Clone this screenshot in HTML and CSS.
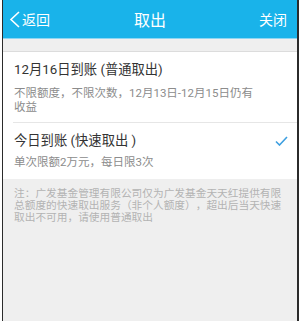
FILE: index.html
```html
<!DOCTYPE html>
<html lang="zh-CN">
<head>
    <meta charset="UTF-8">
    <meta name="viewport" content="width=device-width, initial-scale=1.0">
    <title>取出</title>
    <link rel="stylesheet" href="styles.css">
</head>
<body>
    <div class="frame">
        <!-- Top bar -->
        <div class="top-bar">
            <a class="back-btn" href="#">
                <svg class="back-icon" width="11" height="17" viewBox="0 0 11 17">
                    <path d="M10 1 L2 8.5 L10 16" fill="none" stroke="#fff" stroke-width="1.6"/>
                </svg>
                <span>返回</span>
            </a>
            <div class="top-title">取出</div>
            <a class="close-btn" href="#">关闭</a>
        </div>

        <div class="gap"></div>

        <!-- Options -->
        <div class="option-list">
            <div class="option">
                <div class="option-title">12月16日到账 (普通取出)</div>
                <div class="option-desc">不限额度，不限次数，12月13日-12月15日仍有收益</div>
            </div>
            <div class="option selected">
                <div class="option-title">今日到账 (快速取出 )</div>
                <div class="option-desc">单次限额2万元，每日限3次</div>
                <svg class="check" width="13" height="10" viewBox="0 0 13 10">
                    <path d="M1 5.5 L4.5 9 L12 1" fill="none" stroke="#3d9fe0" stroke-width="1.6"/>
                </svg>
            </div>
        </div>

        <div class="note">注：广发基金管理有限公司仅为广发基金天天红提供有限总额度的快速取出服务（非个人额度），超出后当天快速取出不可用，请使用普通取出</div>
    </div>
</body>
</html>
```

FILE: styles.css
```css
html, body {
    margin: 0;
    padding: 0;
    background: #fff;
}
body {
    font-family: Roboto, "Noto Sans CJK SC", sans-serif;
    text-spacing-trim: space-all; /* keep full-width punctuation */
}
.frame {
    margin-left: 2px;
    width: 294px;
    height: 321px;
    border-left: 1px solid #2b2b2b;
    border-right: 2px solid #2b2b2b;
    background: #efefef;
    display: flex;
    flex-direction: column;
}

/* Top bar */
.top-bar {
    height: 38px;
    background: #19b3ea;
    border-bottom: 1px solid #8dd6f3;
    display: grid;
    grid-template-columns: 1fr auto 1fr;
    align-items: center;
    padding: 0 10px 0 6px;
    color: #fff;
    flex-shrink: 0;
}
.back-btn, .close-btn {
    color: #fff;
    text-decoration: none;
    font-size: 14px;
    display: flex;
    align-items: center;
}
.close-btn {
    justify-self: end;
}
.back-icon {
    margin-right: 2px;
}
.top-title {
    font-size: 16px;
    margin-left: 4px;
}

.gap {
    height: 12px;
    border-bottom: 1px solid #dcdcdc;
    flex-shrink: 0;
}

/* Option list */
.option-list {
    background: #fff;
}
.option {
    position: relative;
    padding: 8px 40px 9px 11px;
}
.option + .option {
    padding-bottom: 10px;
}
.option:first-child::after {
    content: "";
    position: absolute;
    left: 10px;
    right: 0;
    bottom: 0;
    height: 1px;
    background: #e6e6e6;
}
.option-title {
    font-size: 13.3px;
    line-height: 20px;
    color: #333;
}
.option-desc {
    font-size: 11.5px;
    line-height: 14px;
    color: #8c8c8c;
    margin-top: 6px;
}
.selected .option-desc {
    margin-top: 4px;
}
.check {
    position: absolute;
    right: 9px;
    top: 13px;
}

.note {
    padding: 9px 13px 0 11px;
    font-size: 10.7px;
    line-height: 12px;
    color: #b3b3b3;
}
```
